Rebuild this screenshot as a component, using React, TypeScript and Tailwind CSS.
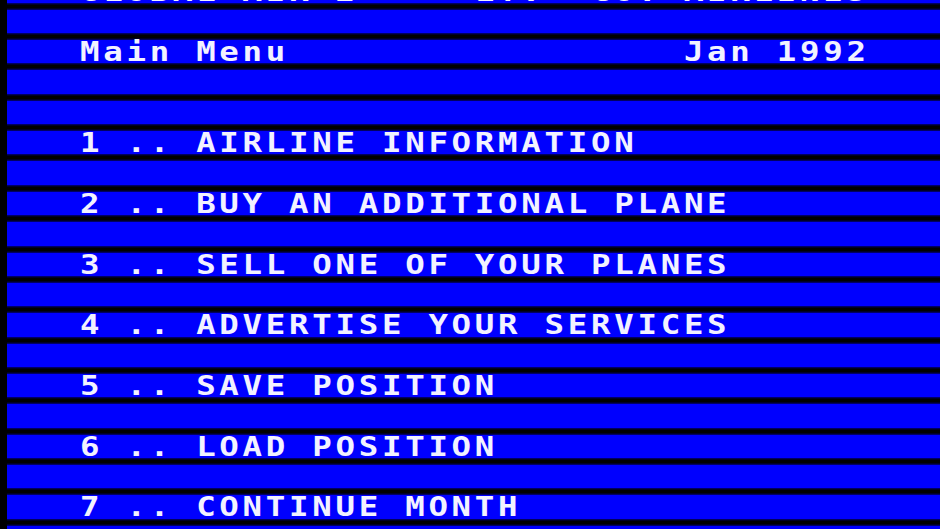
const rows: string[] = [
  "GLOBAL AIR 2     LT.  CO. AIRLINES",
  "",
  "Main Menu                 Jan 1992",
  "",
  "",
  "1 .. AIRLINE INFORMATION",
  "",
  "2 .. BUY AN ADDITIONAL PLANE",
  "",
  "3 .. SELL ONE OF YOUR PLANES",
  "",
  "4 .. ADVERTISE YOUR SERVICES",
  "",
  "5 .. SAVE POSITION",
  "",
  "6 .. LOAD POSITION",
  "",
  "7 .. CONTINUE MONTH",
  "",
];

export default function App() {
  return (
    <main className="flex h-[529px] w-[940px] overflow-hidden bg-black">
      <div className="w-[7px] shrink-0 bg-black" />
      <div className="flex flex-1 flex-col -mt-[20.6px]">
        {rows.map((text, i) => (
          <div key={i} className="flex flex-col shrink-0">
            <div className="flex h-[23.35px] items-center bg-[#0000fe] pl-[73px]">
              <span
                className="origin-left scale-x-[1.2] whitespace-pre text-[27px] font-bold leading-none tracking-[3.1px] text-[#f2f2ff]"
                style={{ fontFamily: '"DejaVu Sans Mono", monospace' }}
              >
                {text}
              </span>
            </div>
            <div className="h-[7px] bg-[linear-gradient(#000080,#000_30%,#000_70%,#000080)]" />
          </div>
        ))}
      </div>
    </main>
  );
}
